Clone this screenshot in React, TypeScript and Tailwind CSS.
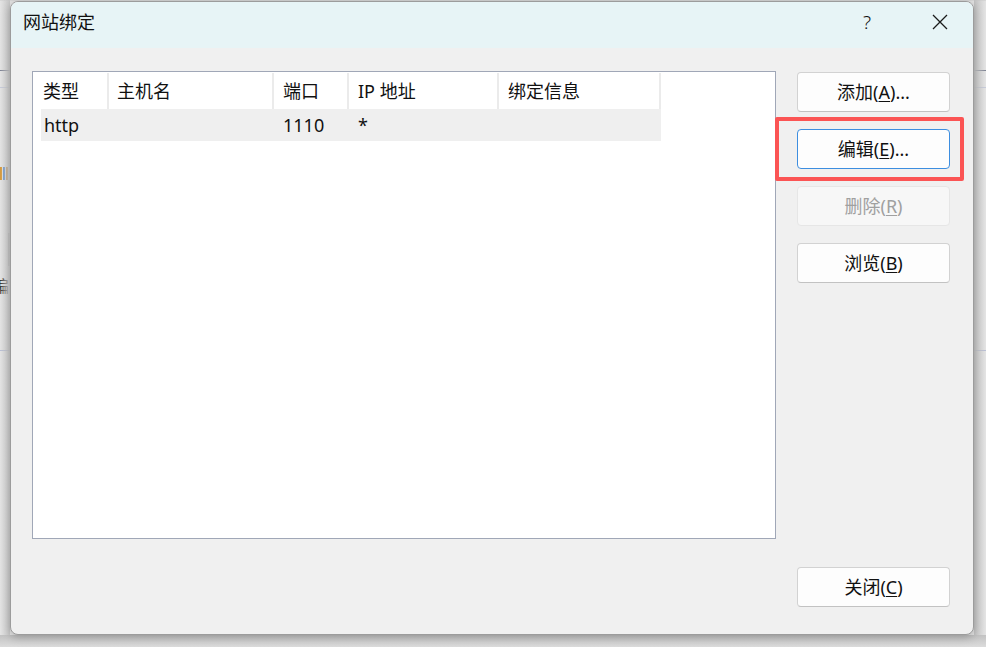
import React from "react"

const FONT = { fontFamily: '"Noto Sans", "Noto Sans CJK SC", sans-serif' }

const columns = [
  { label: "类型", w: "w-[68px]", pad: "pl-[2px]" },
  { label: "主机名", w: "w-[165px]", pad: "pl-[8px]" },
  { label: "端口", w: "w-[75px]", pad: "pl-[9px]" },
  { label: "IP 地址", w: "w-[150px]", pad: "pl-[9px]" },
  { label: "绑定信息", w: "w-[162px]", pad: "pl-[9px]" },
]

const row = ["http", "", "1110", "*", ""]

function Btn({
  label,
  hotkey,
  dots,
  disabled,
  focused,
}: {
  label: string
  hotkey: string
  dots?: boolean
  disabled?: boolean
  focused?: boolean
}) {
  const base =
    "w-[153px] h-[40px] rounded-[4px] flex items-center justify-center text-[18px] leading-none border"
  const look = disabled
    ? "bg-[#f7f7f7] border-[#e6e6e6] text-[#a0a0a0]"
    : focused
    ? "bg-[#fdfdfd] border-[#3d8ee0] text-[#111]"
    : "bg-[#fdfdfd] border-[#d2d2d2] border-b-[#c2c2c2] text-[#111]"
  return (
    <div className={`${base} ${look}`}>
      <span>
        {label}(<span className="underline underline-offset-2">{hotkey}</span>){dots ? "..." : ""}
      </span>
    </div>
  )
}

export default function App() {
  return (
    <div className="relative w-[986px] h-[647px] overflow-hidden bg-[#e4e4e4]" style={FONT}>
      {/* background window fragments */}
      <div className="absolute left-0 top-0 w-[986px] h-[1px] bg-[#d8d8d8]" />
      <div className="absolute left-0 top-[70px] w-[986px] h-[1px] bg-[#7c8192]" />
      <div className="absolute left-0 top-[87px] w-[986px] h-[1px] bg-[#c6cbdb]" />
      <div className="absolute left-0 top-[350px] w-[986px] h-[1px] bg-[#b9bfd6]" />
      <div className="absolute left-0 top-[167px] w-[2px] h-[13px] bg-[#d79a3a]" />
      <div className="absolute left-[3px] top-[167px] w-[2px] h-[13px] bg-[#5b8fd0]" />
      <div className="absolute left-[6px] top-[167px] w-[2px] h-[13px] bg-[#c08a45]" />
      <div className="absolute left-[8px] top-[233px] w-[3px] h-[33px] bg-[#a8a8a8]" />
      <div className="absolute left-0 top-[278px] w-[10px] h-[16px] overflow-hidden">
        <div className="ml-[-8px] text-[17px] leading-none text-[#333]">编</div>
      </div>
      <div className="absolute left-0 top-0 w-[10px] h-[647px] bg-gradient-to-r from-transparent to-[#c8c8c8]" />
      <div className="absolute right-0 top-0 w-[12px] h-[647px] bg-gradient-to-l from-transparent to-[#c4c4c4]" />
      <div className="absolute left-0 bottom-0 w-[986px] h-[12px] bg-gradient-to-b from-[#c2c2c2] to-[#dcdcdc]" />

      {/* dialog */}
      <div className="relative z-10 ml-[10px] mt-[1px] w-[964px] h-[634px] rounded-[8px] border border-[#9c9c9c] bg-[#f0f0f0] overflow-hidden shadow-[0_2px_10px_rgba(0,0,0,0.25)]">
        {/* title bar */}
        <div className="h-[46px] bg-[#e7f4f6] flex items-center pb-[6px] pl-[12px] text-[#111]">
          <span className="text-[18px] leading-none">网站绑定</span>
          <span className="ml-auto text-[19px] leading-none mr-[61px] font-light">?</span>
          <svg width="16" height="16" viewBox="0 0 16 16" className="mr-[25px]">
            <path d="M1 1 L15 15 M15 1 L1 15" stroke="#1a1a1a" strokeWidth="1.3" fill="none" />
          </svg>
        </div>

        {/* body */}
        <div className="flex pl-[21px] pt-[23px]">
          {/* list view */}
          <div className="w-[744px] h-[468px] border border-[#a0a7b7] bg-white pl-[8px] pt-[1px]">
            <div className="flex h-[36px]">
              {columns.map((c) => (
                <div
                  key={c.label}
                  className={`${c.w} ${c.pad} h-full flex items-center border-r-2 border-[#ebebeb] text-[18px] leading-none text-[#111]`}
                >
                  {c.label}
                </div>
              ))}
            </div>
            <div className="flex h-[32px] w-[620px] bg-[#efefef]">
              {columns.map((c, i) => (
                <div
                  key={c.label}
                  className={`${c.w} ${c.pad} h-full flex items-center pb-[1px] text-[18px] leading-none text-[#111]`}
                >
                  {i === 0 ? <span className="ml-[1px]">{row[i]}</span> : row[i]}
                </div>
              ))}
            </div>
          </div>

          {/* buttons */}
          <div className="ml-[21px] pt-[1px] flex flex-col gap-[17px]">
            <Btn label="添加" hotkey="A" dots />
            <div className="relative">
              <Btn label="编辑" hotkey="E" dots focused />
              {/* annotation box */}
              <div className="absolute left-[-22px] top-[-12px] w-[189px] h-[64px] border-[4px] border-[#fb5454] rounded-[2px]" />
            </div>
            <Btn label="删除" hotkey="R" disabled />
            <Btn label="浏览" hotkey="B" />
            <div className="mt-[267px]">
              <Btn label="关闭" hotkey="C" />
            </div>
          </div>
        </div>
      </div>
    </div>
  )
}
